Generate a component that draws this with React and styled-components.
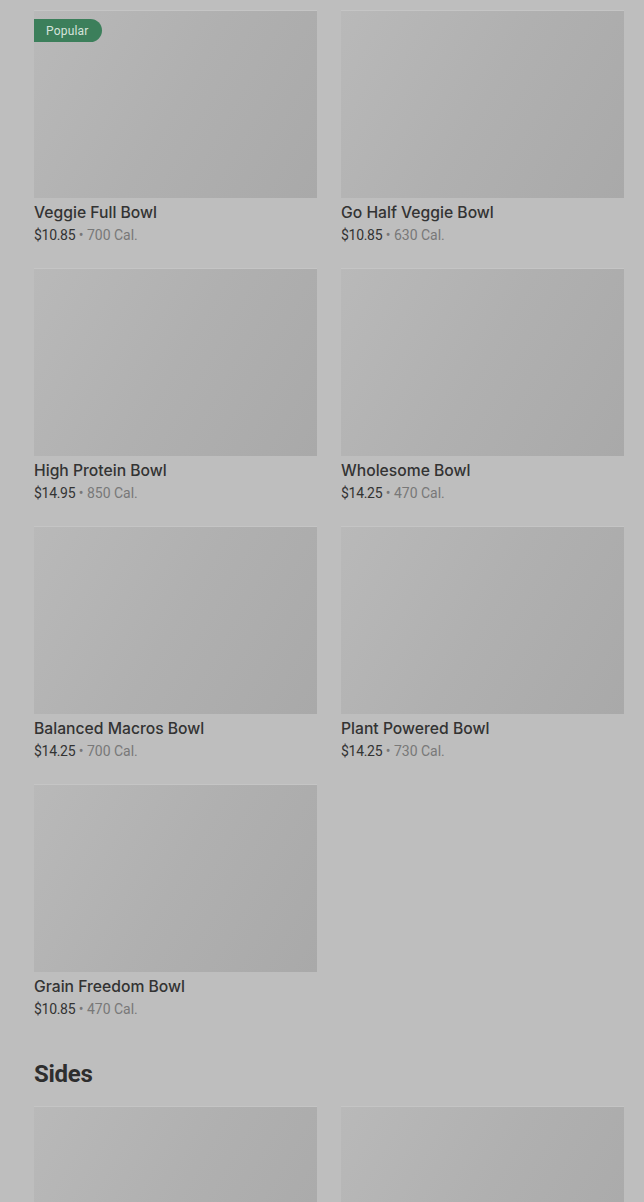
import React from 'react';
import styled, { createGlobalStyle } from 'styled-components';

const bowls = [
  { name: 'Veggie Full Bowl', price: '$10.85', cal: '700 Cal.', popular: true },
  { name: 'Go Half Veggie Bowl', price: '$10.85', cal: '630 Cal.' },
  { name: 'High Protein Bowl', price: '$14.95', cal: '850 Cal.' },
  { name: 'Wholesome Bowl', price: '$14.25', cal: '470 Cal.' },
  { name: 'Balanced Macros Bowl', price: '$14.25', cal: '700 Cal.' },
  { name: 'Plant Powered Bowl', price: '$14.25', cal: '730 Cal.' },
  { name: 'Grain Freedom Bowl', price: '$10.85', cal: '470 Cal.' },
];

const sides = [{ name: 'Side 1' }, { name: 'Side 2' }];

const MenuItem = ({ item }) => (
  <Card>
    <ImageBox>
      {item.popular && <Badge>Popular</Badge>}
    </ImageBox>
    {item.price && (
      <>
        <ItemTitle>{item.name}</ItemTitle>
        <ItemMeta>
          <Price>{item.price}</Price> • {item.cal}
        </ItemMeta>
      </>
    )}
  </Card>
);

const App = () => {
  return (
    <>
      <GlobalStyle />
      <Page>
        <Grid>
          {bowls.map(item => (
            <MenuItem key={item.name} item={item} />
          ))}
        </Grid>
        <SectionTitle>Sides</SectionTitle>
        <Grid>
          {sides.map(item => (
            <MenuItem key={item.name} item={item} />
          ))}
        </Grid>
      </Page>
    </>
  );
};

const GlobalStyle = createGlobalStyle`
  body {
    margin: 0;
    background: #bebebe;
    font-family: Roboto, "Noto Sans", sans-serif;
    overflow: hidden;
  }
`;

const Page = styled.main`
  padding: 11px 20px 0 34px;
  height: 1202px;
  box-sizing: border-box;
  overflow: hidden;
`;

const Grid = styled.div`
  display: grid;
  grid-template-columns: 283px 283px;
  column-gap: 24px;
  row-gap: 24px;
`;

const Card = styled.div`
  display: flex;
  flex-direction: column;
`;

const ImageBox = styled.div`
  position: relative;
  height: 187px;
  background: linear-gradient(120deg, #b9b9b9 0%, #b0b0b0 50%, #a9a9a9 100%);
  box-shadow: 0 -1px 0 #c5c5c5;
  margin-bottom: 5px;
`;

const Badge = styled.span`
  position: absolute;
  top: 8px;
  left: 0;
  height: 23px;
  padding: 0 13px 0 12px;
  display: flex;
  align-items: center;
  background: #3c7f5b;
  color: #d6e3db;
  font-size: 12px;
  letter-spacing: 0.2px;
  border-radius: 0 12px 12px 0;
`;

const ItemTitle = styled.div`
  font-family: Inter, Roboto, sans-serif;
  font-size: 15.7px;
  line-height: 20px;
  font-weight: 500;
  color: #333333;
`;

const ItemMeta = styled.div`
  margin-top: 2px;
  font-size: 14px;
  line-height: 20px;
  color: #787878;
`;

const Price = styled.span`
  color: #333333;
  letter-spacing: -0.3px;
`;

const SectionTitle = styled.h2`
  margin: 39px 0 17px;
  font-size: 24px;
  line-height: 32px;
  font-weight: 700;
  color: #2e2e2e;
  letter-spacing: -0.3px;
`;

export default App;
